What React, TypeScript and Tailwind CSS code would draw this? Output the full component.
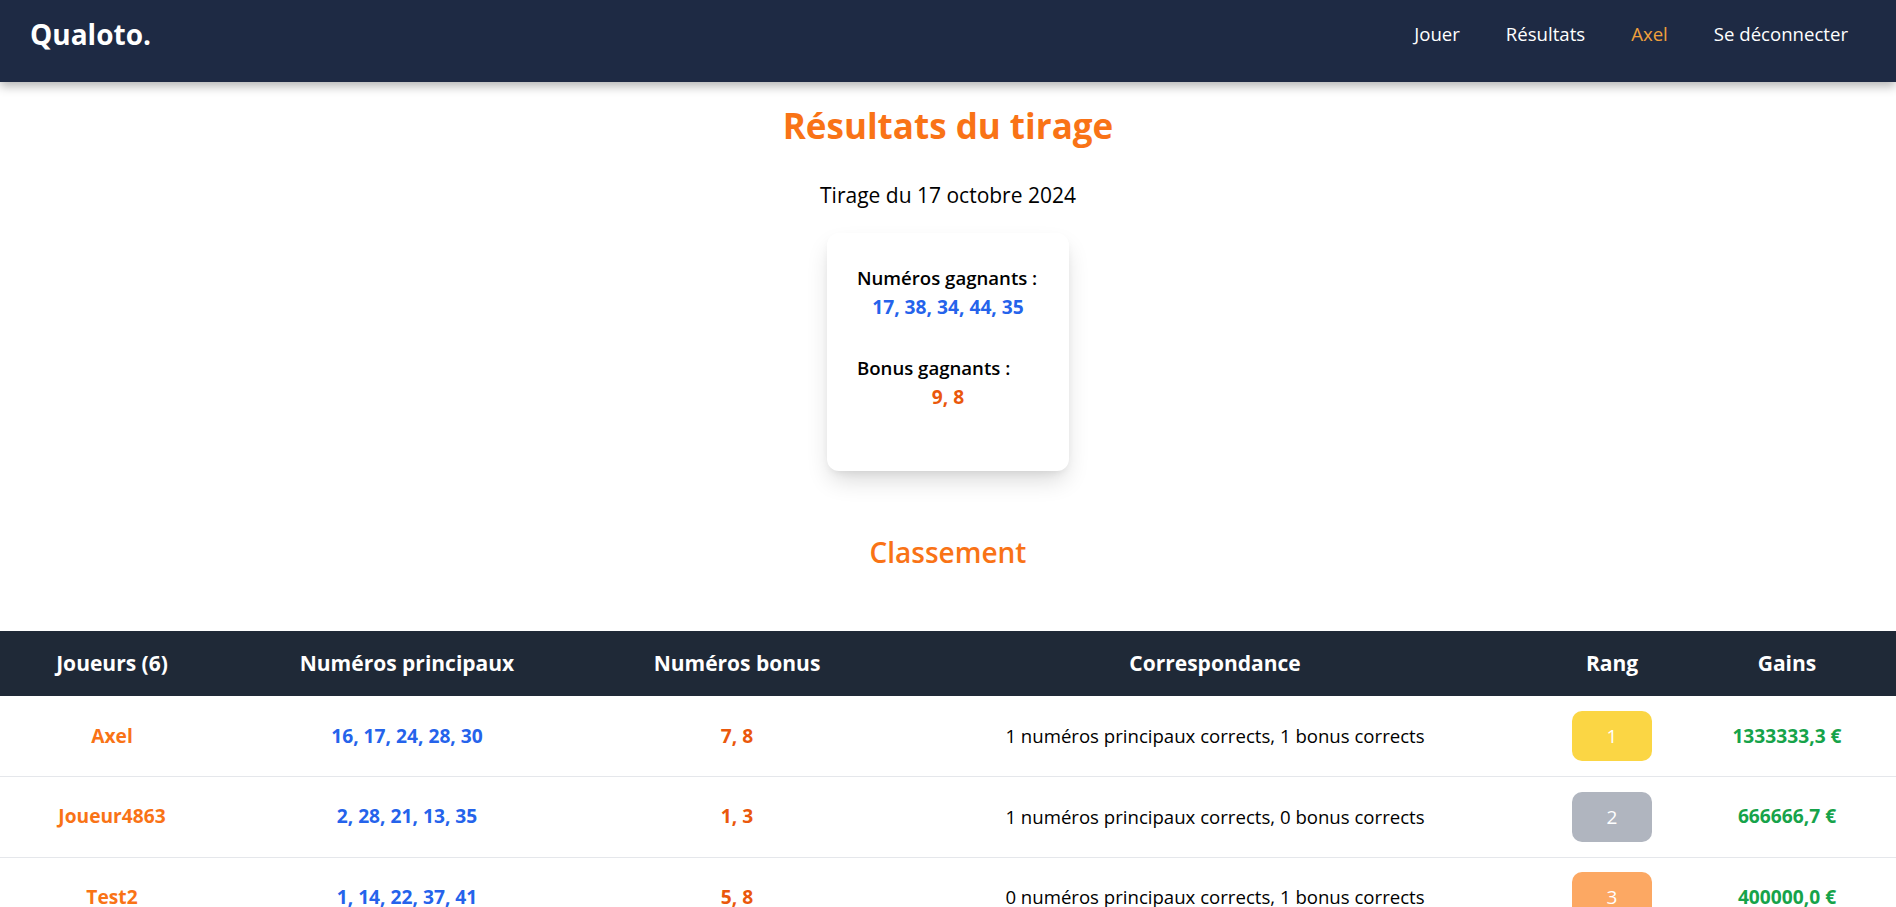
import React from "react";

type Row = {
  name: string;
  main: string;
  bonus: string;
  match: string;
  rank: number;
  gain: string;
};

const rows: Row[] = [
  {
    name: "Axel",
    main: "16, 17, 24, 28, 30",
    bonus: "7, 8",
    match: "1 numéros principaux corrects, 1 bonus corrects",
    rank: 1,
    gain: "1333333,3 €",
  },
  {
    name: "Joueur4863",
    main: "2, 28, 21, 13, 35",
    bonus: "1, 3",
    match: "1 numéros principaux corrects, 0 bonus corrects",
    rank: 2,
    gain: "666666,7 €",
  },
  {
    name: "Test2",
    main: "1, 14, 22, 37, 41",
    bonus: "5, 8",
    match: "0 numéros principaux corrects, 1 bonus corrects",
    rank: 3,
    gain: "400000,0 €",
  },
];

function RankBadge({ rank }: { rank: number }) {
  const cls =
    rank === 1
      ? "bg-[#fbd644]"
      : rank === 2
      ? "bg-[#b0b5bf]"
      : "bg-[#fca863]";
  return (
    <span
      className={`inline-flex h-[50px] w-[80px] items-center justify-center rounded-[10px] text-[19px] text-white ${cls}`}
    >
      {rank}
    </span>
  );
}

export default function App() {
  return (
    <div className="min-h-screen bg-white font-['Open_Sans','Noto_Sans',sans-serif] text-black">
      <nav className="relative z-10 flex h-[82px] items-center justify-between bg-[#1e2a44] pb-[14px] pl-[30px] pr-[48px] shadow-[0_4px_10px_rgba(0,0,0,0.3)]">
        <div className="text-[28px] font-bold leading-[36px] text-white">Qualoto.</div>
        <div className="flex items-center gap-[46px] text-[18.6px] leading-[26px] text-white">
          <span>Jouer</span>
          <span>Résultats</span>
          <span className="text-[#f0a03c]">Axel</span>
          <span>Se déconnecter</span>
        </div>
      </nav>

      <main className="flex flex-col items-center">
        <h1 className="mt-[22px] text-[35px] font-bold leading-[43px] text-[#f97316]">
          Résultats du tirage
        </h1>
        <p className="mt-[34px] text-[21px] leading-[29px]">Tirage du 17 octobre 2024</p>

        <div className="mt-[23px] w-[242px] rounded-[12px] bg-white pb-[60px] pl-[30px] pr-[30px] pt-[30px] shadow-[0_12px_24px_-4px_rgba(0,0,0,0.16),0_4px_10px_-4px_rgba(0,0,0,0.1)]">
          <p className="whitespace-nowrap text-[18.6px] font-semibold leading-[29px]">
            Numéros gagnants :
          </p>
          <p className="whitespace-nowrap text-center text-[19.2px] font-bold leading-[29px] text-[#2563eb]">
            17, 38, 34, 44, 35
          </p>
          <p className="mt-[32px] whitespace-nowrap text-[18.6px] font-semibold leading-[29px]">
            Bonus gagnants :
          </p>
          <p className="whitespace-nowrap text-center text-[19.2px] font-bold leading-[29px] text-[#ea580c]">
            9, 8
          </p>
        </div>

        <h2 className="mt-[63px] text-[28px] font-semibold leading-[36px] text-[#f97316]">
          Classement
        </h2>

        <table className="mt-[61px] w-full table-fixed border-collapse">
          <colgroup>
            <col className="w-[224px]" />
            <col className="w-[366px]" />
            <col className="w-[294px]" />
            <col className="w-[662px]" />
            <col className="w-[132px]" />
            <col className="w-[218px]" />
          </colgroup>
          <thead>
            <tr className="h-[65px] bg-[#1f2937] text-[21px] font-bold text-white">
              <th className="text-center">Joueurs (6)</th>
              <th className="text-center">Numéros principaux</th>
              <th className="text-center">Numéros bonus</th>
              <th className="text-center">Correspondance</th>
              <th className="text-center">Rang</th>
              <th className="text-center">Gains</th>
            </tr>
          </thead>
          <tbody className="text-[18.6px]">
            {rows.map((r) => (
              <tr key={r.name} className="h-[80.5px] border-b border-[#e5e7eb]">
                <td className="text-center text-[19.2px] font-bold text-[#f97316]">{r.name}</td>
                <td className="text-center text-[19.2px] font-bold text-[#2563eb]">{r.main}</td>
                <td className="text-center text-[19.2px] font-bold text-[#ea580c]">{r.bonus}</td>
                <td className="text-center">{r.match}</td>
                <td className="text-center">
                  <RankBadge rank={r.rank} />
                </td>
                <td className="text-center text-[19.2px] font-bold text-[#16a34a]">{r.gain}</td>
              </tr>
            ))}
          </tbody>
        </table>
      </main>
    </div>
  );
}
